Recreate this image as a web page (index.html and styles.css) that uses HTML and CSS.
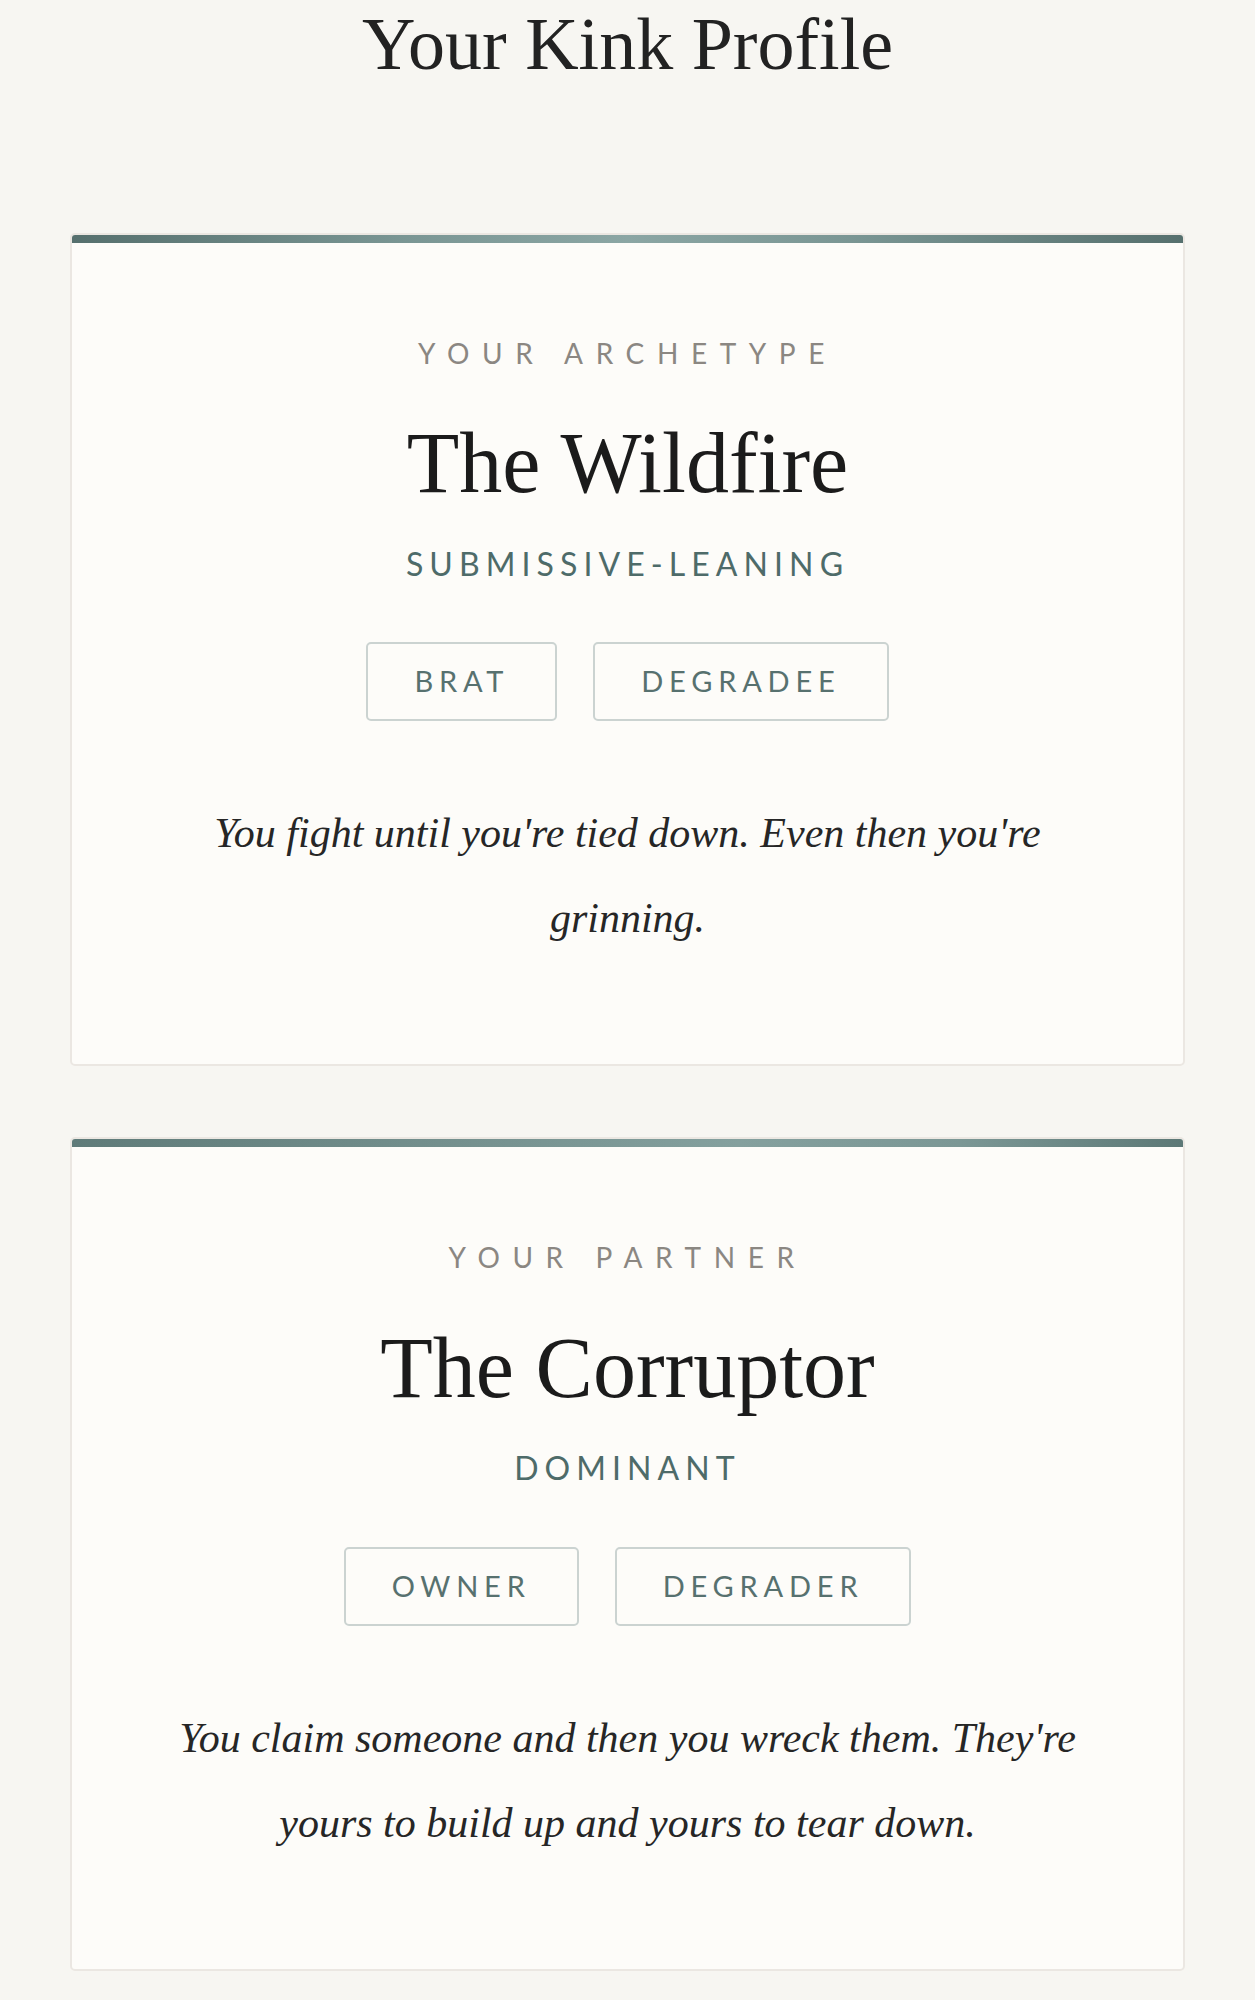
FILE: index.html
```html
<!DOCTYPE html>
<html lang="en">
<head>
<meta charset="utf-8">
<title>Your Kink Profile</title>
<link rel="stylesheet" href="styles.css">
</head>
<body>
<main class="page">
  <h1 class="title">Your Kink Profile</h1>
  <div class="cards">
    <section class="card">
      <div class="card-bar bar-center"></div>
      <div class="card-body">
        <p class="label">Your Archetype</p>
        <h2 class="name">The Wildfire</h2>
        <p class="role">Submissive-Leaning</p>
        <div class="tags">
          <span class="tag">Brat</span>
          <span class="tag">Degradee</span>
        </div>
        <p class="desc">You fight until you're tied down. Even then you're grinning.</p>
      </div>
    </section>
    <section class="card">
      <div class="card-bar bar-right"></div>
      <div class="card-body">
        <p class="label">Your Partner</p>
        <h2 class="name">The Corruptor</h2>
        <p class="role">Dominant</p>
        <div class="tags">
          <span class="tag">Owner</span>
          <span class="tag">Degrader</span>
        </div>
        <p class="desc">You claim someone and then you wreck them. They're yours to build up and yours to tear down.</p>
      </div>
    </section>
  </div>
</main>
</body>
</html>
```
FILE: styles.css
```css
html, body {
  margin: 0;
  padding: 0;
}

body {
  background: #f7f6f2;
  font-family: "Liberation Serif", "Times New Roman", serif;
  color: #1c1c1c;
}

.page {
  padding: 0 70px 40px;
}

.title {
  margin: 0;
  font-size: 74px;
  line-height: 1.2;
  font-weight: 400;
  text-align: center;
  color: #222222;
}

.cards {
  margin-top: 144px;
  display: flex;
  flex-direction: column;
  gap: 71px;
}

.card {
  background: #fdfcf9;
  border: 2px solid #ebe7e2;
  border-radius: 5px;
  overflow: hidden;
}

.card-bar {
  height: 8px;
}

.bar-center {
  background: linear-gradient(90deg, #56706e 0%, #7a9694 30%, #8ba6a4 50%, #7a9694 70%, #56706e 100%);
}

.bar-right {
  background: linear-gradient(90deg, #5f7b79 0%, #6e8a88 25%, #84a09e 60%, #7b9795 80%, #5c7876 100%);
}

.card-body {
  padding: 94px 80px 103px;
  text-align: center;
}

.label {
  margin: 0;
  font-family: Lato, "Open Sans", sans-serif;
  font-size: 28px;
  line-height: 33.6px;
  letter-spacing: 0.45em;
  text-transform: uppercase;
  color: #8b8782;
}

.name {
  margin: 46px 0 0;
  font-size: 86px;
  line-height: 1.1;
  font-weight: 400;
  color: #1b1b1b;
}

.role {
  margin: 34px 0 0;
  font-family: Lato, "Open Sans", sans-serif;
  font-size: 32px;
  line-height: 38.4px;
  letter-spacing: 0.19em;
  text-transform: uppercase;
  color: #4e6b69;
}

.tags {
  margin-top: 59px;
  display: flex;
  justify-content: center;
  gap: 36px;
}

.tag {
  border: 2px solid #cbd3d1;
  border-radius: 5px;
  padding: 20px 46px;
  font-family: Lato, "Open Sans", sans-serif;
  font-size: 29px;
  line-height: 34.8px;
  letter-spacing: 0.2em;
  text-transform: uppercase;
  color: #57716f;
}

.desc {
  margin: 70px 0 0;
  font-style: italic;
  font-size: 42px;
  line-height: 85px;
  color: #262626;
}
```
